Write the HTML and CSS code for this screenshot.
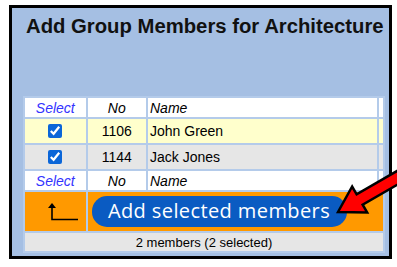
FILE: index.html
```html
<!DOCTYPE html>
<html lang="en">
<head>
  <meta charset="UTF-8">
  <meta name="viewport" content="width=device-width, initial-scale=1.0">
  <title>Add Group Members</title>
  <link rel="stylesheet" href="styles.css">
</head>
<body>

  <div class="frame">
    <h1>Add Group Members for Architecture</h1>

    <table class="members">
      <tr class="head">
        <td class="col-select">Select</td>
        <td class="col-no">No</td>
        <td class="col-name">Name</td>
        <td class="col-extra"></td>
      </tr>
      <tr class="row odd">
        <td class="col-select"><input type="checkbox" checked></td>
        <td class="col-no">1106</td>
        <td class="col-name">John Green</td>
        <td class="col-extra"></td>
      </tr>
      <tr class="row even">
        <td class="col-select"><input type="checkbox" checked></td>
        <td class="col-no">1144</td>
        <td class="col-name">Jack Jones</td>
        <td class="col-extra"></td>
      </tr>
      <tr class="head">
        <td class="col-select">Select</td>
        <td class="col-no">No</td>
        <td class="col-name">Name</td>
        <td class="col-extra"></td>
      </tr>
      <tr class="actions">
        <td class="back">
          <svg width="34" height="20" viewBox="0 0 34 20">
            <polygon points="7,0 3,5 11,5" fill="#000"/>
            <path d="M7 4 V16.5 H33" fill="none" stroke="#000" stroke-width="1.6"/>
          </svg>
        </td>
        <td colspan="3"><button class="add-btn">Add selected members</button></td>
      </tr>
      <tr class="status">
        <td colspan="4">2 members (2 selected)</td>
      </tr>
    </table>
  </div>

  <!-- red pointer arrow drawn over the page -->
  <svg class="pointer" width="397" height="267" viewBox="0 0 397 267">
    <polygon transform="translate(338,212) rotate(-30)"
      points="0,0 25,-15 25,-6 72,-6 72,6 25,6 25,15"
      fill="#ff0000" stroke="#000" stroke-width="2.5" stroke-linejoin="miter"/>
  </svg>

</body>
</html>
```

FILE: styles.css
```css
body {
  margin: 0;
  background-color: #fff;
  font-family: "Liberation Sans", Arial, sans-serif;
}

.frame {
  margin: 5px 0 0 9px;
  width: 377px;
  height: 242px;
  border: 3px solid #000;
  background-color: #a5bfe3;
  padding: 6px 0 0 0;
  box-sizing: content-box;
}

h1 {
  margin: 0 0 0 14px;
  font-size: 20.3px;
  line-height: 24px;
  font-weight: bold;
  color: #111;
}

.members {
  margin: 58px 0 0 11px;
  border-collapse: separate;
  border-spacing: 2px;
  background-color: #b4cbea;
  font-size: 14px;
  width: 362px;
}

.members td {
  padding: 0 2px;
}

.col-select {
  width: 56px;
  text-align: center;
}

.col-no {
  width: 54px;
  text-align: center;
}

.col-name {
  width: 223px;
  text-align: left;
}

.col-extra {
  width: 4px;
  padding: 0 !important;
}

.head td {
  background-color: #fff;
  font-style: italic;
  height: 19px;
  color: #000;
}

.head .col-select {
  color: #3333ff;
}

.row td {
  height: 24px;
}

.odd td {
  background-color: #ffffcc;
}

.even td {
  background-color: #e6e6e6;
}

.row input[type="checkbox"] {
  width: 14px;
  height: 14px;
  margin: 3px 0 0 0;
  accent-color: #0b66d8;
}

.actions td {
  background-color: #ff9900;
  height: 39px;
}

.back {
  text-align: center;
}

.back svg {
  display: block;
  margin: 2px 0 0 18px;
}

.add-btn {
  margin-left: 2px;
  width: 255px;
  height: 31px;
  border: none;
  border-radius: 15px;
  background-color: #0a5bc2;
  color: #fff;
  font-family: "Open Sans", Roboto, sans-serif;
  font-size: 20px;
  letter-spacing: 0.4px;
  padding: 0 0 2px 0;
}

.status td {
  background-color: #e6e6e6;
  text-align: center;
  font-size: 13px;
  height: 18px;
  padding: 0;
}

.pointer {
  position: absolute;
  left: 0;
  top: 0;
  pointer-events: none;
}
```
